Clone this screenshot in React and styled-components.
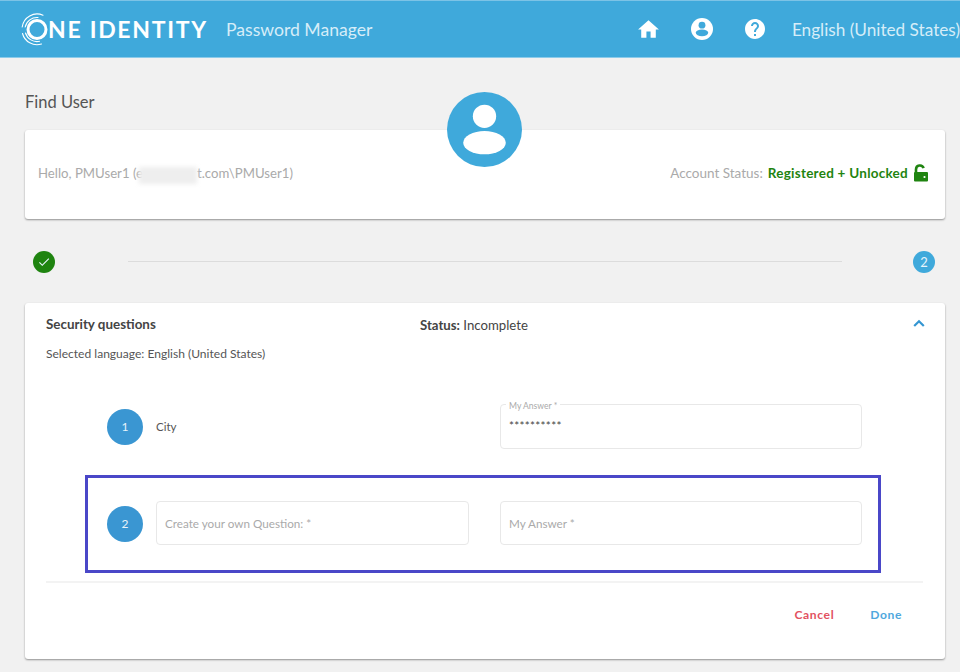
import React from 'react';
import styled, { createGlobalStyle } from 'styled-components';
import { MdHome, MdHelp, MdCheck } from 'react-icons/md';

const GlobalStyle = createGlobalStyle`
  html, body {
    margin: 0;
    padding: 0;
    background: #f1f1f1;
    font-family: "Lato", "Noto Sans", sans-serif;
    overflow: hidden;
  }
  * { box-sizing: border-box; }
`;

const Page = styled.div`
  width: 960px;
  height: 672px;
  background: #f1f1f1;
`;

const Header = styled.header`
  height: 58px;
  display: flex;
  align-items: center;
  padding: 0 0 0 21px;
  background: #3fa9db;
  border-top: 1px solid #7cc3e6;
  border-bottom: 1px solid #8ccbea;
  color: #fff;
`;

const Logo = styled.div`
  display: flex;
  align-items: center;
  width: 205px;
`;

const LogoText = styled.span`
  margin-left: -5px;
  font-size: 23px;
  font-weight: 700;
  letter-spacing: 1.7px;
  white-space: nowrap;
`;

const AppName = styled.span`
  flex: 1;
  color: #d6edf8;
  font-size: 17.6px;
`;

const NavIcons = styled.nav`
  display: flex;
  align-items: center;
  gap: 30px;
  margin-right: 25px;
`;

const Language = styled.span`
  color: #d6edf8;
  font-size: 17.2px;
  white-space: nowrap;
`;

const Main = styled.main`
  padding: 0 15px 0 25px;
`;

const Title = styled.h1`
  margin: 0;
  padding-top: 34px;
  height: 72px;
  color: #555;
  font-size: 16.5px;
  font-weight: 400;
  line-height: 20px;
`;

const Card = styled.section`
  position: relative;
  background: #fff;
  border-radius: 3px;
  box-shadow: 0 1px 2px rgba(0, 0, 0, 0.4);
`;

const UserCard = styled(Card)`
  height: 89px;
  display: flex;
  align-items: center;
  justify-content: space-between;
  padding: 0 16px 0 13px;
`;

const Greeting = styled.span`
  color: #aaa;
  font-size: 13.2px;
`;

const Redact = styled.span`
  display: inline-block;
  vertical-align: middle;
  width: 58px;
  height: 17px;
  margin-left: -4px;
  background: #eee;
  filter: blur(2px);
`;

const AvatarSpot = styled.div`
  position: absolute;
  left: 422px;
  top: -38px;
  display: flex;
`;

const AccountStatus = styled.div`
  display: flex;
  align-items: center;
  gap: 5px;
  margin-bottom: 3px;
  color: #aaa;
  font-size: 13.5px;
`;

const StatusValue = styled.strong`
  color: #1f8410;
  font-weight: 700;
  letter-spacing: 0.25px;
`;

const Stepper = styled.div`
  display: flex;
  align-items: center;
  height: 22px;
  margin-top: 32px;
  padding: 0 10px 0 8px;
`;

const StepDot = styled.div`
  width: 22px;
  height: 22px;
  flex: none;
  display: flex;
  align-items: center;
  justify-content: center;
  border-radius: 50%;
  background: ${(p) => (p.$done ? '#1f8410' : '#3fa9db')};
  color: #e6f4fb;
  font-size: 13px;
`;

const StepLine = styled.div`
  flex: 1;
  height: 1px;
  margin: 0 71px 1px 73px;
  background: #dcdcdc;
`;

const QuestionsCard = styled(Card)`
  height: 356px;
  margin-top: 30px;
  padding: 0 22px 0 21px;
`;

const CardHead = styled.div`
  display: flex;
  align-items: center;
  height: 43px;
  color: #444;
  font-size: 13px;
`;

const CardTitle = styled.strong`
  width: 374px;
  margin-bottom: 2px;
  font-size: 13.4px;
  font-weight: 700;
`;

const Status = styled.span`
  flex: 1;
  font-size: 13.2px;
  b { font-weight: 700; }
`;

const Chevron = styled.svg`
  flex: none;
  margin: 0 -2px 4px 0;
`;

const SelectedLanguage = styled.p`
  margin: 0;
  height: 58px;
  color: #555;
  font-size: 12.05px;
  line-height: 16px;
`;

const QuestionRow = styled.div`
  position: relative;
  display: flex;
  align-items: center;
  gap: 13px;
  height: 45px;
  margin-top: ${(p) => p.$gap || 0}px;
  padding-left: 61px;
`;

const Badge = styled.div`
  width: 36px;
  height: 36px;
  flex: none;
  display: flex;
  align-items: center;
  justify-content: center;
  border-radius: 50%;
  background: #3a96d2;
  color: #e8f3fa;
  font-size: 12px;
`;

const QuestionText = styled.div`
  width: 313px;
  color: #555;
  font-size: 11.5px;
`;

const Field = styled.div`
  position: relative;
  align-self: flex-start;
  width: ${(p) => p.$width}px;
  height: ${(p) => p.$height || 45}px;
  margin-left: ${(p) => p.$offset || 0}px;
`;

const Input = styled.input`
  width: 100%;
  height: 100%;
  padding: ${(p) => (p.$filled ? '0 8px 4px' : '0 8px')};
  border: 1px solid #e8e8e8;
  border-radius: 4px;
  background: #fff;
  color: #444;
  font-family: "Lato", "Noto Sans", sans-serif;
  font-size: 11.7px;
  letter-spacing: ${(p) => (p.$filled ? '0.3px' : '0')};
  outline: none;
  &::placeholder {
    color: #aaa;
    opacity: 1;
  }
`;

const FloatLabel = styled.label`
  position: absolute;
  left: 6px;
  top: -3px;
  padding: 0 3px;
  background: #fff;
  color: #aaa;
  font-size: 8.6px;
  line-height: 10px;
`;

const Annotation = styled.div`
  position: absolute;
  left: 39px;
  top: -26px;
  width: 796px;
  height: 98px;
  border: 3px solid #4a47c8;
  pointer-events: none;
`;

const Divider = styled.hr`
  margin: 35px 0 0 0;
  border: 0;
  height: 2px;
  background: #f3f3f3;
`;

const Actions = styled.div`
  display: flex;
  justify-content: flex-end;
  gap: 36px;
  margin-top: 24px;
  padding-right: 21px;
`;

const ActionButton = styled.button`
  padding: 0;
  border: 0;
  background: none;
  color: ${(p) => p.$color};
  font-family: "Lato", "Noto Sans", sans-serif;
  font-size: 12.1px;
  font-weight: 700;
  letter-spacing: 0.6px;
`;

function LogoMark() {
  return (
    <svg width="32" height="36" viewBox="0 0 32 36" fill="none" stroke="#fff" strokeLinecap="round">
      <circle cx="16" cy="18.5" r="9" strokeWidth="3" />
      <path d="M17 6.5A12 12 0 0 0 4.2 16" strokeWidth="1.1" />
      <path d="M4.5 22a12 12 0 0 0 14 8.3" strokeWidth="1.1" />
      <path d="M22 4.2A15 15 0 0 0 1.2 16" strokeWidth="1.1" />
      <path d="M1.5 22.5a15 15 0 0 0 19 10.5" strokeWidth="1.1" />
    </svg>
  );
}

function PersonCircle({ size, disc, figure }) {
  return (
    <svg width={size} height={size} viewBox="0 0 74 74">
      <circle cx="37" cy="37" r="37" fill={disc} />
      <circle cx="37" cy="24" r="11.5" fill={figure} />
      <ellipse cx="37" cy="50" rx="21" ry="11.5" fill={figure} />
    </svg>
  );
}

function OpenLock() {
  return (
    <svg width="16" height="18" viewBox="0 0 16 18">
      <path d="M3 8.5V5.4a3.9 3.9 0 0 1 7.6-1.2" fill="none" stroke="#1f8410" strokeWidth="2.6" />
      <rect x="1" y="8" width="14" height="9.5" rx="1" fill="#1f8410" />
      <circle cx="11.5" cy="13" r="1.1" fill="#fff" />
    </svg>
  );
}

export default function App() {
  return (
    <Page>
      <GlobalStyle />
      <Header>
        <Logo>
          <LogoMark />
          <LogoText>NE IDENTITY</LogoText>
        </Logo>
        <AppName>Password Manager</AppName>
        <NavIcons>
          <MdHome size={25} />
          <PersonCircle size={22} disc="#fff" figure="#3fa9db" />
          <MdHelp size={24} />
        </NavIcons>
        <Language>English (United States)</Language>
      </Header>
      <Main>
        <Title>Find User</Title>
        <UserCard>
          <AvatarSpot>
            <PersonCircle size={75} disc="#3fa9db" figure="#fff" />
          </AvatarSpot>
          <Greeting>
            Hello, PMUser1 (e<Redact />t.com\PMUser1)
          </Greeting>
          <AccountStatus>
            Account Status: <StatusValue>Registered + Unlocked</StatusValue>
            <OpenLock />
          </AccountStatus>
        </UserCard>
        <Stepper>
          <StepDot $done>
            <MdCheck size={14} />
          </StepDot>
          <StepLine />
          <StepDot>2</StepDot>
        </Stepper>
        <QuestionsCard>
          <CardHead>
            <CardTitle>Security questions</CardTitle>
            <Status>
              <b>Status:</b> Incomplete
            </Status>
            <Chevron width="12" height="8" viewBox="0 0 12 8" fill="none" stroke="#3596d2" strokeWidth="2.2">
              <path d="M1.2 7 6 2.2 10.8 7" />
            </Chevron>
          </CardHead>
          <SelectedLanguage>Selected language: English (United States)</SelectedLanguage>
          <QuestionRow>
            <Badge>1</Badge>
            <QuestionText>City</QuestionText>
            <Field $width={362} $offset={18}>
              <FloatLabel>My Answer *</FloatLabel>
              <Input $filled readOnly value="**********" />
            </Field>
          </QuestionRow>
          <QuestionRow $gap={52}>
            <Badge>2</Badge>
            <Field $width={313} $height={44}>
              <Input placeholder="Create your own Question: *" />
            </Field>
            <Field $width={362} $height={44} $offset={18}>
              <Input placeholder="My Answer *" />
            </Field>
            <Annotation />
          </QuestionRow>
          <Divider />
          <Actions>
            <ActionButton $color="#e2525f">Cancel</ActionButton>
            <ActionButton $color="#4fa8de">Done</ActionButton>
          </Actions>
        </QuestionsCard>
      </Main>
    </Page>
  );
}
